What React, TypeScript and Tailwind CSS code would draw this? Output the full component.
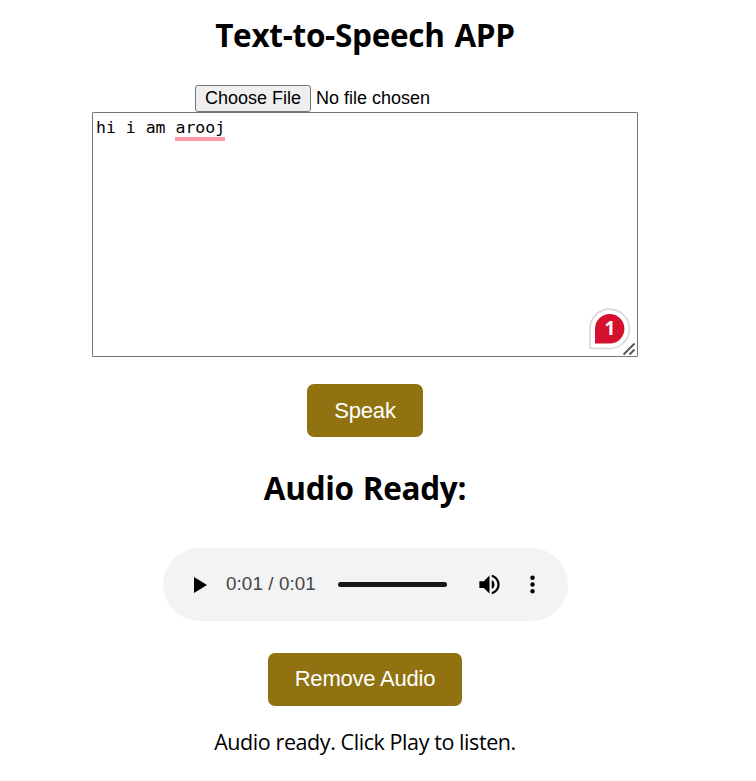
export default function App() {
  return (
    <main className="flex h-[781px] w-[730px] flex-col items-center overflow-hidden bg-white text-black">
      <h1 className="mt-[11px] flex h-[48px] items-center whitespace-nowrap font-['Open_Sans',sans-serif] text-[31.5px] font-bold leading-[48px] tracking-[-0.3px] [word-spacing:2px]">
        Text-to-Speech APP
      </h1>

      <div className="mt-[26px] flex h-[27px] w-[340px] items-center font-['Liberation_Sans',Arial,sans-serif] text-[18px]">
        <button className="flex h-[27px] w-[116px] shrink-0 items-start justify-center rounded-[3px] border border-[#767676] bg-[#efefef] leading-[25px] whitespace-nowrap">
          Choose File
        </button>
        <span className="ml-[5px] whitespace-nowrap leading-[25px]">No file chosen</span>
      </div>

      <div className="relative h-[245px] w-[546px] shrink-0 rounded-[1px] border border-[#767676] pl-[3px] pt-[3px] font-['DejaVu_Sans_Mono',monospace] text-[16.5px] leading-[23px] whitespace-pre">
        hi i am <span className="inline-block h-[25px] border-b-4 border-[#ff9aad]">arooj</span>
        <svg className="absolute left-[496px] top-[195px]" width="42" height="42" viewBox="0 0 42 42">
          <path d="M1 40.5V20.5a19.7 19.7 0 1 1 19.7 20Z" fill="#fff" stroke="#d5d7e3" strokeWidth="1.6" />
          <path d="M6 35.5V21a14.7 14.7 0 1 1 14.7 14.5Z" fill="#d5112f" />
        </svg>
        <span className="absolute left-[496px] top-[204px] w-[42px] text-center font-['Open_Sans',sans-serif] text-[19px] font-bold leading-[23px] text-white">
          1
        </span>
        <svg className="absolute bottom-0 right-[1px]" width="14" height="14" viewBox="0 0 14 14">
          <path d="M1.5 12.5 12.5 1.5M7.5 12.5l5-5" stroke="#555" strokeWidth="1.8" />
        </svg>
      </div>

      <button className="mt-[27px] h-[53px] w-[116px] shrink-0 rounded-[7px] bg-[#917211] font-['Liberation_Sans',Arial,sans-serif] text-[22px] tracking-[-0.2px] text-white">
        Speak
      </button>

      <h2 className="mt-[27px] h-[48px] whitespace-nowrap font-['Open_Sans',sans-serif] text-[31.5px] font-bold leading-[48px] tracking-[-0.3px] [word-spacing:1px]">
        Audio Ready:
      </h2>

      <div className="ml-px mt-[36px] flex h-[73px] w-[405px] shrink-0 items-center rounded-full bg-[#f1f3f4] font-['Liberation_Sans',Arial,sans-serif]">
        <svg className="ml-[31px] shrink-0" width="13" height="16" viewBox="0 0 13 16">
          <path d="M0 0v16l13-8Z" />
        </svg>
        <span className="mb-[2px] ml-[19px] w-[90px] whitespace-nowrap text-[18.8px] leading-[20px] tracking-[0.1px] text-[#444]">0:01 / 0:01</span>
        <div className="ml-[22px] h-[5px] w-[109px] rounded-full bg-[#171717]" />
        <svg className="mb-px ml-[29px] shrink-0" width="27" height="27" viewBox="0 0 24 24">
          <path d="M3 9v6h4l5 5V4L7 9H3zm13.5 3A4.5 4.5 0 0 0 14 7.97v8.05c1.48-.73 2.5-2.25 2.5-4.02zM14 3.23v2.06c2.89.86 5 3.54 5 6.71s-2.11 5.85-5 6.71v2.06c4.01-.91 7-4.49 7-8.77s-2.99-7.86-7-8.77z" />
        </svg>
        <svg className="mb-px ml-[16px] shrink-0" width="27" height="27" viewBox="0 0 24 24">
          <path d="M12 8a2 2 0 1 0 0-4 2 2 0 0 0 0 4zm0 2a2 2 0 1 0 0 4 2 2 0 0 0 0-4zm0 6a2 2 0 1 0 0 4 2 2 0 0 0 0-4z" />
        </svg>
      </div>

      <button className="mt-[32px] h-[53px] w-[194px] shrink-0 rounded-[7px] bg-[#917211] pb-[2px] font-['Liberation_Sans',Arial,sans-serif] text-[22px] tracking-[-0.2px] text-white whitespace-nowrap">
        Remove Audio
      </button>

      <p className="mt-[21px] whitespace-nowrap font-['Open_Sans',sans-serif] text-[21.5px] leading-[30px] tracking-[-0.42px]">
        Audio ready. Click Play to listen.
      </p>
    </main>
  );
}
